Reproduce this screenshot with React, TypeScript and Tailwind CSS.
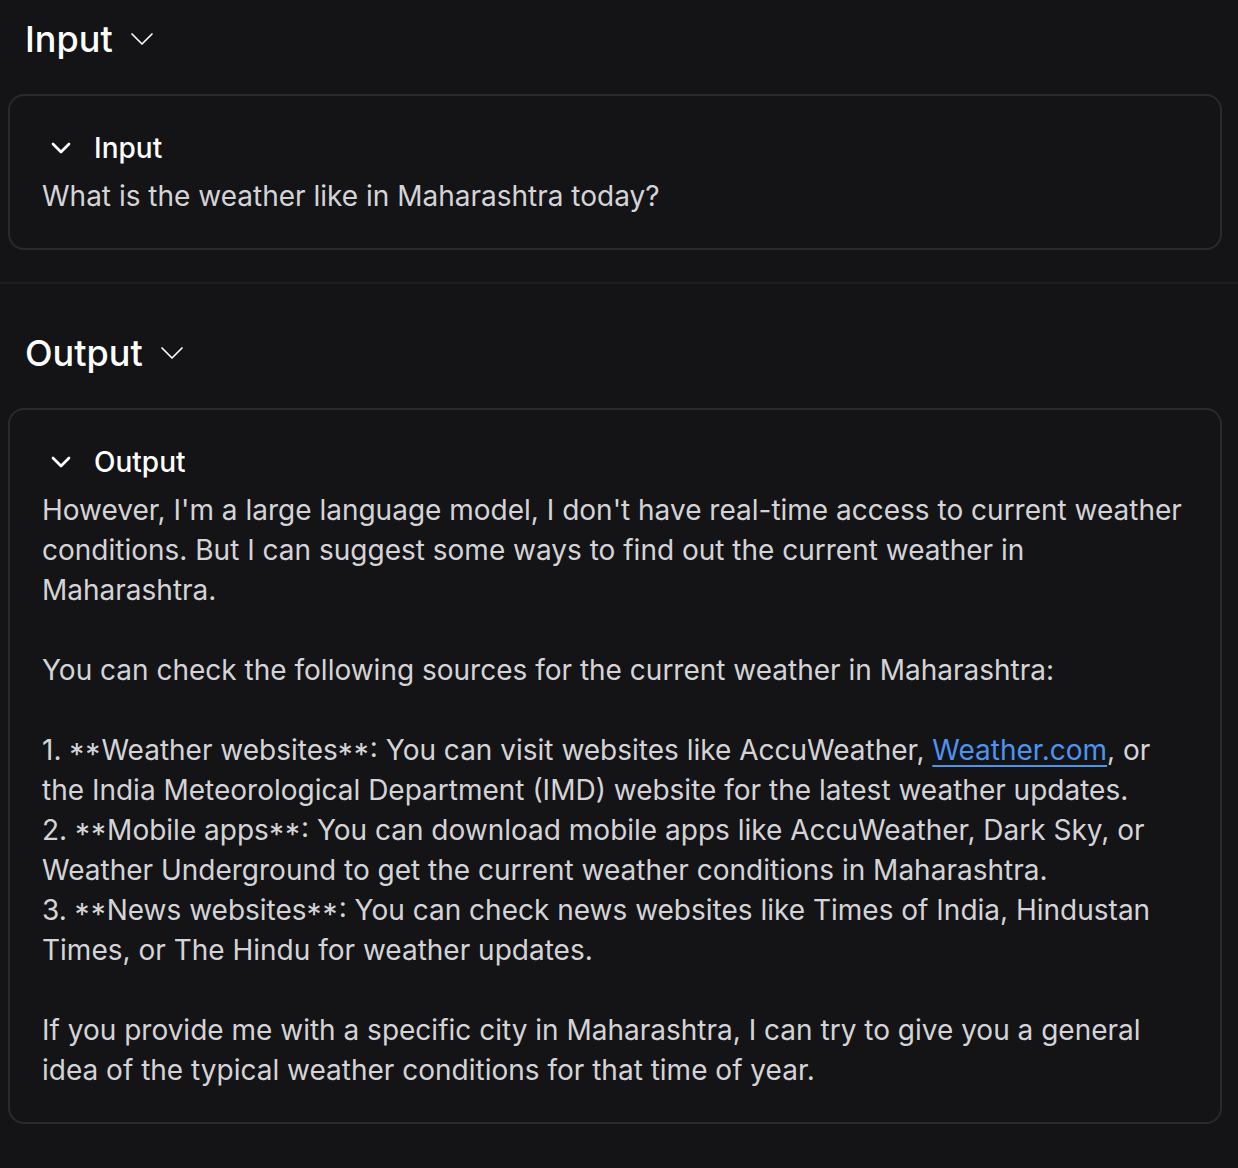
import { ReactNode } from 'react'

function Chevron({ className, strokeWidth }: { className: string; strokeWidth: number }) {
  return (
    <svg
      viewBox="0 0 24 24"
      fill="none"
      stroke="currentColor"
      strokeWidth={strokeWidth}
      strokeLinecap="round"
      strokeLinejoin="round"
      className={className}
    >
      <path d="m6 9 6 6 6-6" />
    </svg>
  )
}

// markdown stars shown as-is, sitting at mid height like the reference
function Stars() {
  return <span className="inline-block align-[-5px] text-[30px] leading-5 tracking-[1px]">**</span>
}

function Section({ title, top, children }: { title: string; top: string; children: ReactNode }) {
  return (
    <section className={top}>
      <div className="flex h-12 items-center pl-[25px]">
        <h2 className="text-[36px] leading-[48px] font-medium text-white">{title}</h2>
        <Chevron className="ml-[9px] h-10 w-10 text-white" strokeWidth={1} />
      </div>
      <div className="mt-[31px] ml-2 mr-4 rounded-2xl border-2 border-[#2a2a2e] p-8">
        <div className="flex h-10 items-center">
          <Chevron className="ml-[3px] h-8 w-8 text-white" strokeWidth={2} />
          <span className="ml-[17px] text-[28px] leading-10 font-medium text-white">{title}</span>
        </div>
        <div className="mt-2 text-[28px] leading-10 text-[#d4d4d8]">{children}</div>
      </div>
    </section>
  )
}

export default function App() {
  return (
    <div className="min-h-[1168px] w-full bg-[#141416]" style={{ fontFamily: 'Inter, "Noto Sans", sans-serif' }}>
      <div className="border-b-2 border-[#1e1e21] pb-8">
        <Section title="Input" top="pt-[15px]">
          What is the weather like in Maharashtra today?
        </Section>
      </div>
      <Section title="Output" top="pt-[45px]">
        <p>
          However, I'm a large language model, I don't have real-time access to current weather conditions. But I can
          suggest some ways to find out the current weather in Maharashtra.
        </p>
        <br />
        <p>You can check the following sources for the current weather in Maharashtra:</p>
        <br />
        <p>
          1. <Stars />Weather websites<Stars />: You can visit websites like AccuWeather,{' '}
          <a href="#" className="text-[#4d93f0] underline decoration-2 underline-offset-[5px]">
            Weather.com
          </a>
          , or the India Meteorological Department (IMD) website for the latest weather updates.
        </p>
        <p>
          2. <Stars />Mobile apps<Stars />: You can download mobile apps like AccuWeather, Dark Sky, or Weather
          Underground to get the current weather conditions in Maharashtra.
        </p>
        <p>
          3. <Stars />News websites<Stars />: You can check news websites like Times of India, Hindustan Times, or The
          Hindu for weather updates.
        </p>
        <br />
        <p>
          If you provide me with a specific city in Maharashtra, I can try to give you a general idea of the typical
          weather conditions for that time of year.
        </p>
      </Section>
    </div>
  )
}
